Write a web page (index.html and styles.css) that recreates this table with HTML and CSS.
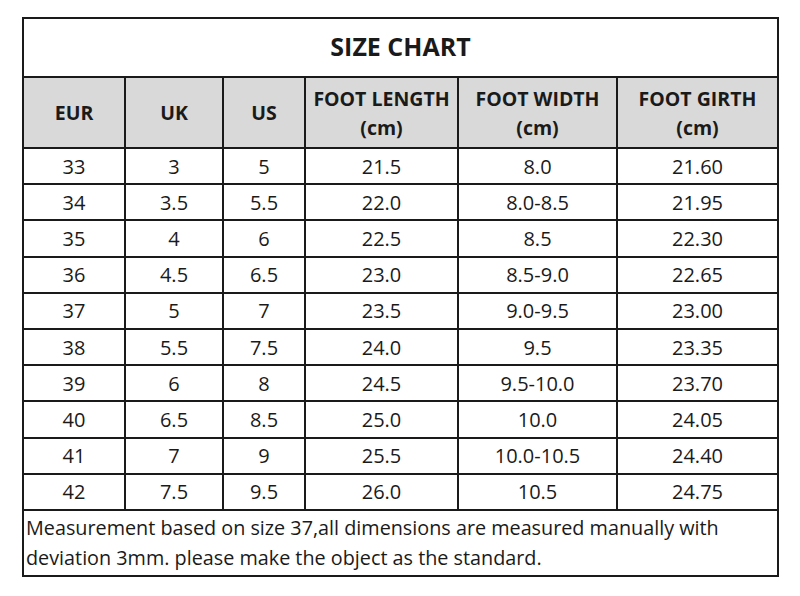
FILE: index.html
```html
<!DOCTYPE html>
<html>
<head>
<meta charset="utf-8">
<link rel="stylesheet" href="styles.css">
</head>
<body>
<div class="page">
<table class="chart">
  <colgroup>
    <col class="c1"><col class="c2"><col class="c3"><col class="c4"><col class="c5"><col class="c6">
  </colgroup>
  <tr class="title-row"><td colspan="6">SIZE CHART</td></tr>
  <tr class="head-row">
    <th>EUR</th><th>UK</th><th>US</th>
    <th>FOOT LENGTH<br>(cm)</th><th>FOOT WIDTH<br>(cm)</th><th>FOOT GIRTH<br>(cm)</th>
  </tr>
  <tr><td>33</td><td>3</td><td>5</td><td>21.5</td><td>8.0</td><td>21.60</td></tr>
  <tr><td>34</td><td>3.5</td><td>5.5</td><td>22.0</td><td>8.0-8.5</td><td>21.95</td></tr>
  <tr><td>35</td><td>4</td><td>6</td><td>22.5</td><td>8.5</td><td>22.30</td></tr>
  <tr><td>36</td><td>4.5</td><td>6.5</td><td>23.0</td><td>8.5-9.0</td><td>22.65</td></tr>
  <tr><td>37</td><td>5</td><td>7</td><td>23.5</td><td>9.0-9.5</td><td>23.00</td></tr>
  <tr><td>38</td><td>5.5</td><td>7.5</td><td>24.0</td><td>9.5</td><td>23.35</td></tr>
  <tr><td>39</td><td>6</td><td>8</td><td>24.5</td><td>9.5-10.0</td><td>23.70</td></tr>
  <tr><td>40</td><td>6.5</td><td>8.5</td><td>25.0</td><td>10.0</td><td>24.05</td></tr>
  <tr><td>41</td><td>7</td><td>9</td><td>25.5</td><td>10.0-10.5</td><td>24.40</td></tr>
  <tr><td>42</td><td>7.5</td><td>9.5</td><td>26.0</td><td>10.5</td><td>24.75</td></tr>
  <tr class="note-row"><td colspan="6">Measurement based on size 37,all dimensions are measured manually with deviation 3mm. please make the object as the standard.</td></tr>
</table>
</div>
</body>
</html>
```
FILE: styles.css
```css
html, body {
  margin: 0;
  padding: 0;
  background: #fff;
}
.page {
  padding: 17px 0 0 22px;
}
.chart {
  border-collapse: collapse;
  table-layout: fixed;
  width: 755px;
  font-family: "Open Sans", sans-serif;
  color: #1a1a1a;
  border: 2px solid #1a1a1a;
}
.c1 { width: 102px; }
.c2 { width: 98px; }
.c3 { width: 82px; }
.c4 { width: 153px; }
.c5 { width: 159px; }
.c6 { width: 161px; }
.chart td, .chart th {
  border: 2px solid #1a1a1a;
  text-align: center;
  padding: 0;
  font-size: 20px;
  height: 34.2px;
  font-weight: 400;
}
.title-row td {
  height: 54px;
  font-size: 25px;
  font-weight: 700;
  padding-bottom: 3px;
}
.head-row th {
  background: #d9d9d9;
  font-weight: 700;
  height: 69px;
  line-height: 29px;
  font-size: 19.5px;
}
.note-row td {
  text-align: left;
  height: 64px;
  padding: 0 2px;
  line-height: 30px;
  font-size: 19.8px;
}
```
